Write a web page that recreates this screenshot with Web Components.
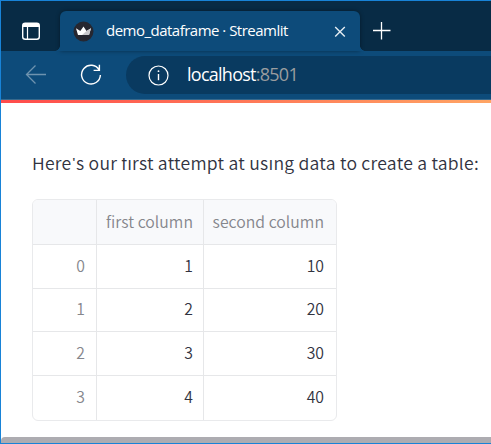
<!DOCTYPE html>
<html lang="en"><head><meta charset="utf-8"><title>demo_dataframe · Streamlit</title>
<style>html,body{margin:0;height:100%;overflow:hidden;background:#fff}</style></head><body>
<browser-window>
 <tab-strip slot="chrome"><browser-tab>demo_dataframe · Streamlit</browser-tab></tab-strip>
 <nav-bar slot="chrome"><span>localhost</span><span slot="port">:8501</span></nav-bar>
 <page-text>Here's our first attempt at using data to create a table:</page-text>
 <data-frame></data-frame>
</browser-window>
<script>
const define=(name,html,init)=>customElements.define(name,class extends HTMLElement{
  constructor(){super();this.attachShadow({mode:'open'}).innerHTML=html;if(init)init(this.shadowRoot)}
});
define('browser-window',`<style>
:host{box-sizing:border-box;display:flex;flex-direction:column;width:491px;height:444px;border:solid #1883d7;border-width:1px 0 1px 1px;background:#fff;overflow:hidden}
.accent{height:3px;margin-top:1px;background:linear-gradient(90deg,#ff4b4b,#ffa564 490px);flex:none}
.edge{height:1px;background:#38698c;margin-bottom:-1px;flex:none}
main{flex:1;padding:55px 0 0 31px}
.foot{height:6px;background:#adacb1;border-top-left-radius:4px;flex:none}
</style><slot name="chrome"></slot><div class="edge"></div><div class="accent"></div><main><slot></slot></main><div class="foot"></div>`);
define('tab-strip',`<style>
:host{display:flex;height:50px;flex:none;background:#082b45;align-items:flex-end}
.pane{width:59px;height:40px;flex:none}
svg{display:block;fill:none;stroke:#fff}
.plus{width:50px;height:40px}
</style><svg class="pane" viewBox="1 11 59 40"><rect x="22.7" y="23.2" width="16.6" height="16" rx="2.5" stroke-width="1.4"/><path d="M23 25.3h16" stroke-width="3.4"/><path d="M27.5 27v12" stroke-width="1.2"/></svg><slot></slot>
<svg class="plus" viewBox="360 11 50 40"><path d="M373 30.5h17.5M381.5 22v17.5" stroke-width="1.3"/></svg>`);
define('browser-tab',`<style>
:host{display:flex;box-sizing:border-box;width:300px;height:40px;background:#0d4b7a;border-radius:6px 6px 0 0;align-items:center;padding:0 12px 0 13px;color:#fff;font:15px/20px "Open Sans","Noto Sans",sans-serif;box-shadow:0 0 4px #0006;position:relative}
:host::before,:host::after{content:"";position:absolute;bottom:0;width:5px;height:5px}
:host::before{left:-5px;background:radial-gradient(circle at 0 0,transparent 4.5px,#0d4b7a 5px)}
:host::after{right:-5px;background:radial-gradient(circle at 100% 0,transparent 4.5px,#0d4b7a 5px)}
.t{flex:1;margin-left:12px;padding-bottom:2px;white-space:nowrap;letter-spacing:-.51px}svg{flex:none}
</style><svg width="21" height="21" viewBox="0 0 21 21"><circle cx="10.5" cy="10.5" r="10" fill="#262730"/><path fill="#fff" d="M3 7.2 7.3 10 10.5 5.5 13.5 10 18 7.2 16 14H5z"/><path fill="#c9c9cd" d="M13.5 10 18 7.2 16 14H9z"/></svg><span class="t"><slot></slot></span>
<svg width="16" height="16" viewBox="0 0 16 16"><path d="M3.2 4 12.8 13.6M12.8 4 3.2 13.6" stroke="#e5edf3" stroke-width="1.4"/></svg>`);
define('nav-bar',`<style>
:host{display:flex;height:48px;flex:none;background:#0d4b7a;align-items:center}
.i{width:125px;height:48px;flex:none}
.a{display:flex;flex:1;height:38px;align-items:center;background:#093a60;border-radius:19px 0 0 19px;padding-left:22px;box-sizing:border-box;color:#fff;font:18px/24px "Open Sans","Noto Sans",sans-serif;letter-spacing:-.74px}
.a svg{margin-right:18px;flex:none}.u{padding-bottom:2px}.p{color:#9a9d9f}svg{fill:none;stroke:#fff}
</style><svg class="i" viewBox="1 51 125 48"><path d="M46 74.5H26.5M35.5 65.5 26.5 74.5 35.5 83.5" stroke="#6e93af" stroke-width="1.3"/><path d="M99.2 70A9.4 9.4 0 1 0 100.4 75M99.4 64.7V70.4H93.6" stroke-width="1.4"/></svg>
<div class="a"><svg width="21" height="21" viewBox="0 0 21 21"><circle cx="10.5" cy="10.5" r="9.5" stroke-width="1.2"/><path d="M10.5 9v6.2" stroke-width="1.4"/><circle cx="10.5" cy="6.2" r=".9" fill="#fff" stroke="none"/></svg><span class="u"><slot></slot><span class="p"><slot name="port"></slot></span></span></div>`);
define('page-text',`<style>
:host{display:block;height:41px;overflow:hidden;white-space:nowrap;color:#31333f;font:350 17.6px/24px "Noto Sans CJK SC",sans-serif;letter-spacing:.24px}
div{margin-top:-7px}
</style><div><slot></slot></div>`);
define('data-frame',`<style>
:host{display:grid;box-sizing:border-box;width:305px;height:222px;grid-template-columns:64px 107px 1fr;grid-template-rows:45px 44px 43px 44px 1fr;border:1px solid #e9eaec;border-radius:6px;overflow:hidden;font:350 15.8px/24px "Noto Sans CJK SC",sans-serif;color:#31333f}
div{box-sizing:border-box;display:flex;align-items:center;justify-content:flex-end;padding:0 11px 2px 0;border:solid #e6e7e9;border-width:0 1px 1px 0;white-space:nowrap}
div:nth-of-type(3n+2){padding-right:10px}
div:nth-of-type(3n){border-right:0;padding-right:12px}div:nth-of-type(n+13){border-bottom:0}
.h{background:#f8f9fb;color:#85868c;padding-bottom:0;letter-spacing:.03px}.x{color:#85868c}
</style>`,root=>{
 [['','first column','second column'],[0,1,10],[1,2,20],[2,3,30],[3,4,40]].forEach((row,r)=>row.forEach((v,c)=>{
  const d=document.createElement('div');d.textContent=v;if(!r)d.className='h';else if(!c)d.className='x';root.append(d)}))
});
</script></body></html>
